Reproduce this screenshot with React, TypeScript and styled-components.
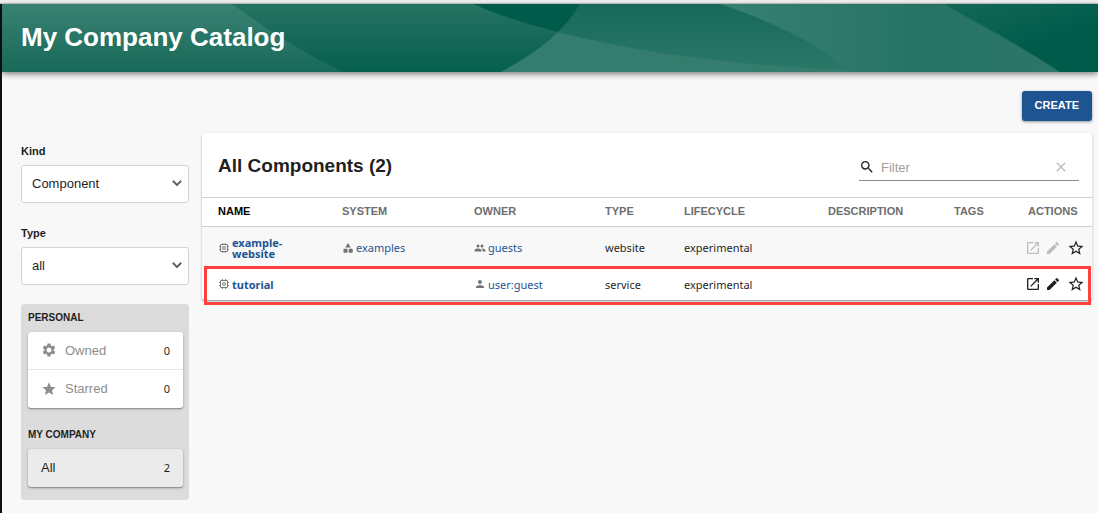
import React from "react";
import styled, { createGlobalStyle } from "styled-components";
import {
  MdCategory,
  MdClear,
  MdEdit,
  MdExpandMore,
  MdOpenInNew,
  MdPeople,
  MdPerson,
  MdSearch,
  MdSettings,
  MdStar,
  MdStarBorder,
} from "react-icons/md";

const sans = `"Liberation Sans", Arial, sans-serif`;
const humanist = `"Noto Sans", "Open Sans", sans-serif`;

const GlobalStyle = createGlobalStyle`
  * { box-sizing: border-box; }
  body {
    margin: 0;
    background: #f8f8f8;
    color: #1f1f1f;
    font-family: ${sans};
  }
  button, input, select { font-family: inherit; }
`;

const Frame = styled.div`
  min-height: 100vh;
  display: flex;
  flex-direction: column;
`;

const TopEdge = styled.div`
  height: 4px;
  background: #f1f1f1;
  border-bottom: 1px solid #c9cdcc;
`;

const Page = styled.div`
  flex: 1;
  border-left: 2px solid #111;
`;

const Header = styled.header`
  position: relative;
  height: 68px;
  display: flex;
  align-items: center;
  padding: 0 19px 2px;
  background: #005b4b;
  box-shadow: 0 2px 6px rgba(0, 0, 0, 0.5);
`;

const HeaderArt = styled.svg`
  position: absolute;
  inset: 0;
  width: 100%;
  height: 100%;
`;

const PageTitle = styled.h1`
  position: relative;
  margin: 0;
  color: #fff;
  font-size: 26px;
  line-height: 32px;
  font-weight: 700;
`;

const Content = styled.main`
  padding: 19px 6px 12px 19px;
`;

const Toolbar = styled.div`
  display: flex;
  justify-content: flex-end;
  margin-bottom: 12px;
`;

const CreateButton = styled.button`
  height: 30px;
  padding: 0 13px 2px;
  border: 0;
  border-radius: 3px;
  background: #1f5493;
  color: #fff;
  font-size: 11px;
  font-weight: 700;
  box-shadow: 0 1px 3px rgba(0, 0, 0, 0.4);
`;

const Columns = styled.div`
  display: grid;
  grid-template-columns: 168px minmax(0, 1fr);
  gap: 13px;
  align-items: start;
`;

const Sidebar = styled.aside`
  display: flex;
  flex-direction: column;
  gap: 19px;
  padding-top: 10px;
`;

const Fields = styled.div`
  display: flex;
  flex-direction: column;
  gap: 22px;
`;

const Field = styled.div`
  display: flex;
  flex-direction: column;
  gap: 6px;
`;

const FieldLabel = styled.label`
  font-size: 11px;
  line-height: 16px;
  font-weight: 700;
`;

const SelectBox = styled.div`
  position: relative;
  color: #616161;
  > svg {
    position: absolute;
    right: 3px;
    top: 9px;
    pointer-events: none;
  }
  > svg path:last-child {
    stroke: currentColor;
    stroke-width: 1;
  }
`;

const Select = styled.select`
  appearance: none;
  display: block;
  width: 100%;
  height: 38px;
  padding: 0 28px 1px 10px;
  border: 1px solid #ced4da;
  border-radius: 3px;
  background: #fff;
  color: #1f1f1f;
  font-size: 13px;
`;

const Filters = styled.div`
  display: flex;
  flex-direction: column;
  padding: 5px 6px 13px 7px;
  border-radius: 3px;
  background: #dcdcdc;
`;

const GroupTitle = styled.h2<{ $spaced?: boolean }>`
  margin: ${(p) => (p.$spaced ? "18px" : "0")} 0 6px;
  font-size: 10px;
  line-height: 17px;
  font-weight: 700;
`;

const Group = styled.div<{ $selected?: boolean }>`
  border-radius: 3px;
  overflow: hidden;
  background: ${(p) => (p.$selected ? "#ebebeb" : "#fff")};
  box-shadow: 0 1px 0 #959595, 0 1px 3px rgba(0, 0, 0, 0.3);
`;

const GroupItem = styled.button<{ $muted?: boolean }>`
  display: flex;
  align-items: center;
  width: 100%;
  height: 38px;
  padding: 0 13px 1px;
  border: 0;
  background: transparent;
  color: ${(p) => (p.$muted ? "#8e8e8e" : "#1f1f1f")};
  font-size: 13px;
  text-align: left;
  &:not(:last-child) { border-bottom: 1px solid #e6e6e6; }
  svg { margin-right: 8px; }
`;

const Count = styled.span`
  margin-left: auto;
  color: #1f1f1f;
  font-family: ${humanist};
  font-size: 11px;
`;

const Card = styled.section`
  border-radius: 3px;
  background: #fff;
  box-shadow: 0 1px 0 #a0a0a0, 0 1px 3px rgba(0, 0, 0, 0.25);
`;

const CardHead = styled.div`
  display: flex;
  align-items: center;
  justify-content: space-between;
  height: 64px;
  padding: 1px 13px 0 16px;
`;

const CardTitle = styled.h2`
  margin: 0;
  font-size: 19px;
  line-height: 24px;
  font-weight: 700;
`;

const Search = styled.div`
  display: flex;
  align-items: center;
  width: 220px;
  height: 26px;
  margin-top: 4px;
  border-bottom: 1px solid #8a8a8a;
`;

const SearchInput = styled.input`
  flex: 1;
  min-width: 0;
  padding: 0 6px;
  border: 0;
  outline: 0;
  background: transparent;
  font-size: 13px;
  &::placeholder { color: #a0a0a0; opacity: 1; }
`;

const IconButton = styled.button`
  display: inline-flex;
  padding: 0;
  border: 0;
  background: transparent;
  color: #1f1f1f;
  &:disabled { color: #bdbdbd; }
`;

const ClearButton = styled(IconButton)`
  margin-right: 10px;
`;

const Table = styled.table`
  width: 100%;
  table-layout: fixed;
  border-collapse: collapse;
`;

const Th = styled.th<{ $active?: boolean; $width?: number }>`
  width: ${(p) => (p.$width ? `${p.$width}px` : "auto")};
  height: 29px;
  padding: 0 0 2px 16px;
  border-top: 1px solid #d0d0d0;
  border-bottom: 1px solid #d0d0d0;
  color: ${(p) => (p.$active ? "#000" : "#6e6e6e")};
  font-size: 11px;
  font-weight: 700;
  text-align: left;
  white-space: nowrap;
`;

const Row = styled.tr<{ $shaded?: boolean; $marked?: boolean }>`
  position: relative;
  height: ${(p) => (p.$shaded ? "42px" : "31px")};
  background: ${(p) => (p.$shaded ? "#f8f8f8" : "transparent")};
  ${(p) =>
    p.$marked &&
    `td:first-child::after {
      content: "";
      position: absolute;
      inset: -3px 1px -5px 2px;
      border: 3px solid #fd4141;
      pointer-events: none;
    }`}
`;

const Td = styled.td`
  padding: 0 16px;
  font-family: ${humanist};
  font-size: 11px;
  line-height: 11px;
`;

const EntityLink = styled.a<{ $strong?: boolean }>`
  display: flex;
  align-items: center;
  gap: 2px;
  color: #1f5493;
  font-weight: ${(p) => (p.$strong ? 700 : 400)};
  text-decoration: none;
  svg { flex: none; color: #757575; }
`;

const Actions = styled.div`
  display: flex;
  align-items: center;
  gap: 4px;
  margin-left: -3px;
`;

const FavoriteButton = styled(IconButton)`
  margin-left: 2px;
`;

function ChipIcon() {
  return (
    <svg width="12" height="12" viewBox="0 0 12 12" fill="none" stroke="currentColor" aria-hidden="true">
      <rect x="2.5" y="2.5" width="7" height="7" rx="0.5" />
      <rect x="4.8" y="4.8" width="2.4" height="2.4" strokeWidth="0.9" />
      <path
        d="M4.5 1V2.5M7.5 1V2.5M4.5 9.5V11M7.5 9.5V11M1 4.5H2.5M1 7.5H2.5M9.5 4.5H11M9.5 7.5H11"
        strokeWidth="0.9"
      />
    </svg>
  );
}

function Waves() {
  return (
    <HeaderArt viewBox="0 0 1096 68" preserveAspectRatio="none" aria-hidden="true">
      <defs>
        <linearGradient id="left" x1="0" y1="0" x2="0" y2="1">
          <stop offset="0" stopColor="#3a8273" />
          <stop offset="1" stopColor="#176958" />
        </linearGradient>
        <linearGradient id="middle" x1="0" y1="0" x2="0" y2="1">
          <stop offset="0" stopColor="#267362" />
          <stop offset="1" stopColor="#065f4e" />
        </linearGradient>
        <linearGradient id="hill" x1="0" y1="0" x2="0" y2="1">
          <stop offset="0" stopColor="#17695a" />
          <stop offset="1" stopColor="#2b7868" />
        </linearGradient>
        <linearGradient id="right" x1="0" y1="0" x2="1" y2="0">
          <stop offset="0" stopColor="#378072" />
          <stop offset="0.6" stopColor="#267364" />
          <stop offset="1" stopColor="#2b7667" />
        </linearGradient>
        <linearGradient id="corner" x1="0" y1="0" x2="0.5" y2="0.7">
          <stop offset="0" stopColor="#146857" />
          <stop offset="1" stopColor="#005b4b" />
        </linearGradient>
      </defs>
      <path d="M0 0H471Q510 17 556 28Q535 49 499 68H0Z" fill="url(#middle)" />
      <path d="M0 0H230Q287 42 341 68H0Z" fill="url(#left)" />
      <path d="M578 0H1096V68H499Q558 36 578 0Z" fill="url(#hill)" />
      <path d="M556 28Q690 63 896 68H499Q535 49 556 28Z" fill="#347d6e" />
      <path d="M718 0H942L1058 68H846Q810 31 718 0Z" fill="url(#right)" />
      <path d="M942 0H1096V68H1058Q1006 34 942 0Z" fill="url(#corner)" />
    </HeaderArt>
  );
}

const columns: { label: string; width?: number }[] = [
  { label: "NAME", width: 124 },
  { label: "SYSTEM", width: 132 },
  { label: "OWNER", width: 131 },
  { label: "TYPE", width: 79 },
  { label: "LIFECYCLE", width: 144 },
  { label: "DESCRIPTION" },
  { label: "TAGS", width: 74 },
  { label: "ACTIONS", width: 80 },
];

const rows = [
  { name: "example-website", system: "examples", owner: "guests", group: true, type: "website", lifecycle: "experimental", editable: false },
  { name: "tutorial", system: "", owner: "user:guest", group: false, type: "service", lifecycle: "experimental", editable: true },
];

export default function App() {
  return (
    <Frame>
      <GlobalStyle />
      <TopEdge />
      <Page>
        <Header>
          <Waves />
          <PageTitle>My Company Catalog</PageTitle>
        </Header>
        <Content>
          <Toolbar>
            <CreateButton>CREATE</CreateButton>
          </Toolbar>
          <Columns>
            <Sidebar>
              <Fields>
                <Field>
                  <FieldLabel htmlFor="kind">Kind</FieldLabel>
                  <SelectBox>
                    <Select id="kind" defaultValue="Component">
                      <option>Component</option>
                    </Select>
                    <MdExpandMore size={18} />
                  </SelectBox>
                </Field>
                <Field>
                  <FieldLabel htmlFor="type">Type</FieldLabel>
                  <SelectBox>
                    <Select id="type" defaultValue="all">
                      <option>all</option>
                    </Select>
                    <MdExpandMore size={18} />
                  </SelectBox>
                </Field>
              </Fields>
              <Filters>
                <GroupTitle>PERSONAL</GroupTitle>
                <Group>
                  <GroupItem $muted>
                    <MdSettings size={16} />
                    Owned<Count>0</Count>
                  </GroupItem>
                  <GroupItem $muted>
                    <MdStar size={16} />
                    Starred<Count>0</Count>
                  </GroupItem>
                </Group>
                <GroupTitle $spaced>MY COMPANY</GroupTitle>
                <Group $selected>
                  <GroupItem>
                    All<Count>2</Count>
                  </GroupItem>
                </Group>
              </Filters>
            </Sidebar>
            <Card>
              <CardHead>
                <CardTitle>All Components (2)</CardTitle>
                <Search>
                  <MdSearch size={16} />
                  <SearchInput placeholder="Filter" aria-label="Filter" />
                  <ClearButton aria-label="Clear filter" disabled>
                    <MdClear size={16} />
                  </ClearButton>
                </Search>
              </CardHead>
              <Table>
                <thead>
                  <tr>
                    {columns.map((c) => (
                      <Th key={c.label} $width={c.width} $active={c.label === "NAME"}>
                        {c.label}
                      </Th>
                    ))}
                  </tr>
                </thead>
                <tbody>
                  {rows.map((r, i) => (
                    <Row key={r.name} $shaded={i === 0} $marked={i === 1}>
                      <Td>
                        <EntityLink href="#" $strong>
                          <ChipIcon />
                          <span>{r.name}</span>
                        </EntityLink>
                      </Td>
                      <Td>
                        {r.system && (
                          <EntityLink href="#">
                            <MdCategory size={12} />
                            {r.system}
                          </EntityLink>
                        )}
                      </Td>
                      <Td>
                        <EntityLink href="#">
                          {r.group ? <MdPeople size={12} /> : <MdPerson size={12} />}
                          {r.owner}
                        </EntityLink>
                      </Td>
                      <Td>{r.type}</Td>
                      <Td>{r.lifecycle}</Td>
                      <Td />
                      <Td />
                      <Td>
                        <Actions>
                          <IconButton aria-label="View" disabled={!r.editable}>
                            <MdOpenInNew size={16} />
                          </IconButton>
                          <IconButton aria-label="Edit" disabled={!r.editable}>
                            <MdEdit size={16} />
                          </IconButton>
                          <FavoriteButton aria-label="Add to favorites">
                            <MdStarBorder size={18} />
                          </FavoriteButton>
                        </Actions>
                      </Td>
                    </Row>
                  ))}
                </tbody>
              </Table>
            </Card>
          </Columns>
        </Content>
      </Page>
    </Frame>
  );
}
